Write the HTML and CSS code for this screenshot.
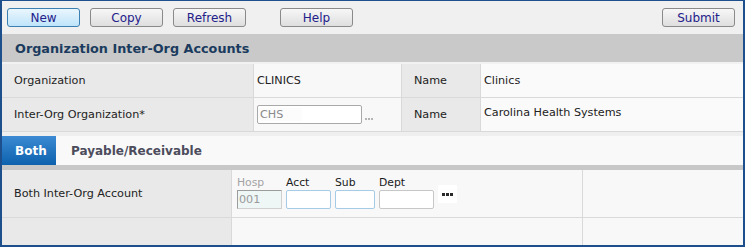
FILE: index.html
```html
<!DOCTYPE html>
<html lang="en">
<head>
    <meta charset="UTF-8">
    <title>Organization Inter-Org Accounts</title>
    <link rel="stylesheet" href="styles.css">
</head>
<body>
    <div class="frame">
        <div class="toolbar">
            <button class="btn btn-active">New</button>
            <button class="btn">Copy</button>
            <button class="btn">Refresh</button>
            <button class="btn btn-help">Help</button>
            <button class="btn btn-submit">Submit</button>
        </div>

        <div class="title">Organization Inter-Org Accounts</div>

        <!-- cabecera -->
        <div class="info">
            <div class="cell label">Organization</div>
            <div class="cell value">CLINICS</div>
            <div class="cell label">Name</div>
            <div class="cell value last">Clinics</div>

            <div class="cell label">Inter-Org Organization*</div>
            <div class="cell value">
                <span class="lookup"><span class="lookup-text">CHS</span></span>
                <svg class="dots dots-light" width="9" height="3" viewBox="0 0 9 3">
                    <rect x="0" y="0" width="2" height="2"/>
                    <rect x="3" y="0" width="2" height="2"/>
                    <rect x="6" y="0" width="2" height="2"/>
                </svg>
            </div>
            <div class="cell label">Name</div>
            <div class="cell value last up">Carolina Health Systems</div>
        </div>

        <div class="tabs-wrap">
            <div class="tabs">
                <div class="tab active">Both</div>
                <div class="tab">Payable/Receivable</div>
            </div>
        </div>

        <!-- cuentas -->
        <div class="accounts">
            <div class="cell label">Both Inter-Org Account</div>
            <div class="cell value top">
                <div class="fields">
                    <div class="field">
                        <span class="field-label muted">Hosp</span>
                        <span class="box box-hosp">001</span>
                    </div>
                    <div class="field">
                        <span class="field-label">Acct</span>
                        <span class="box box-blue box-acct"></span>
                    </div>
                    <div class="field">
                        <span class="field-label">Sub</span>
                        <span class="box box-blue box-sub"></span>
                    </div>
                    <div class="field">
                        <span class="field-label">Dept</span>
                        <span class="box box-dept"></span>
                    </div>
                    <span class="more">
                        <svg width="11" height="3" viewBox="0 0 11 3">
                            <rect x="0" y="0" width="3" height="3"/>
                            <rect x="4" y="0" width="3" height="3"/>
                            <rect x="8" y="0" width="3" height="3"/>
                        </svg>
                    </span>
                </div>
            </div>
            <div class="cell value last"></div>

            <div class="cell label bottom"></div>
            <div class="cell value bottom"></div>
            <div class="cell value last bottom"></div>
        </div>
    </div>
</body>
</html>
```

FILE: styles.css
```css
body {
    margin: 0;
    font-family: "DejaVu Sans", Verdana, sans-serif;
    font-size: 11.2px;
    color: #222;
    background: #ffffff;
}
.frame {
    width: 745px;
    height: 247px;
    box-sizing: border-box;
    border: 2px solid #1d4f8c;
    border-top-width: 1px;
    background: #f8f8f8;
    overflow: hidden;
}
.toolbar {
    display: flex;
    align-items: center;
    height: 33px;
    padding: 0 8px 0 5px;
    background: #f0f0f0;
}
.btn {
    width: 73px;
    height: 19px;
    margin-right: 10px;
    padding: 0;
    border: 1px solid #8a8a8a;
    border-radius: 3px;
    background: linear-gradient(#f7f7f7, #dedede);
    font-family: "DejaVu Sans", Verdana, sans-serif;
    font-size: 12px;
    color: #23208a;
}
.btn-active {
    border-color: #3c7fb1;
    background: linear-gradient(#eaf6fd, #bfe4fa);
}
.btn-help {
    margin-left: 24px;
}
.btn-submit {
    margin: 0 0 0 auto;
}
.title {
    height: 28px;
    line-height: 29px;
    padding-left: 13px;
    background: #c8c9c8;
    border-bottom: 2px solid #f2f2f2;
    font-size: 12.8px;
    font-weight: bold;
    color: #1b3b5e;
}
.info {
    display: grid;
    grid-template-columns: 252px 148px 79px 1fr;
    grid-auto-rows: 34px;
}
.cell {
    display: flex;
    align-items: center;
    box-sizing: border-box;
    border-right: 1px solid #d9d9d9;
    border-bottom: 1px solid #d9d9d9;
}
.cell.last {
    border-right: none;
}
.cell.bottom {
    border-bottom: none;
}
.cell.top {
    align-items: flex-start;
}
.label {
    padding-left: 12px;
    background: #e9e9e9;
}
.value {
    padding-left: 3px;
    background: #f8f8f8;
}
.info .label + .value.last {
    background: #fafafa;
}
.up {
    padding-bottom: 4px;
}
.lookup {
    display: flex;
    align-items: center;
    width: 103px;
    height: 17px;
    border: 1px solid #a9a9a9;
    border-radius: 2px;
    background: #ffffff;
}
.lookup-text {
    width: 42px;
    padding-left: 2px;
    color: #8a8a8a;
    background: #fcfcfc;
}
.dots {
    fill: #222;
}
.dots-light {
    margin: 10px 0 0 3px;
    fill: #b4b4b4;
}
.tabs-wrap {
    padding-top: 4px;
    background: #efefef;
}
.tabs {
    display: flex;
    height: 29px;
    background: #f9f9f9;
    border-bottom: 5px solid #c8c8c8;
}
.tab {
    display: flex;
    align-items: center;
    padding: 0 13px;
    font-size: 12px;
    font-weight: bold;
    color: #4c4c5c;
}
.tab.active {
    width: 54px;
    box-sizing: border-box;
    padding-left: 13px;
    margin-right: 2px;
    background: linear-gradient(#3b8ad3, #0d61ad);
    color: #ffffff;
}
.accounts {
    display: grid;
    grid-template-columns: 230px 351px 1fr;
    grid-template-rows: 48px 1fr;
    height: 77px;
}
.accounts .value {
    padding-left: 5px;
}
.fields {
    display: flex;
    align-items: flex-end;
    gap: 4px;
    padding-top: 7px;
}
.field {
    display: flex;
    flex-direction: column;
}
.field-label {
    font-size: 10.8px;
    line-height: 12px;
    margin-bottom: 1px;
    color: #1a1a1a;
}
.muted {
    color: #a3a3a3;
}
.box {
    box-sizing: border-box;
    height: 19px;
    border: 1px solid #c7c7c7;
    border-radius: 2px;
    background: #ffffff;
    line-height: 17px;
    padding-left: 1px;
    color: #9a9a9a;
}
.box-hosp {
    width: 45px;
    border-color: #9c9c9c #d0d0d0 #d0d0d0 #9c9c9c;
    border-radius: 0;
    background: #eef6f6;
}
.box-blue {
    border-color: #a6cbe6;
}
.box-acct {
    width: 45px;
}
.box-sub {
    width: 40px;
}
.box-dept {
    width: 55px;
}
.more {
    display: flex;
    align-items: center;
    justify-content: center;
    align-self: flex-start;
    width: 19px;
    height: 18px;
    margin-top: 8px;
    background: #ffffff;
    fill: #2a2a2a;
}
```
